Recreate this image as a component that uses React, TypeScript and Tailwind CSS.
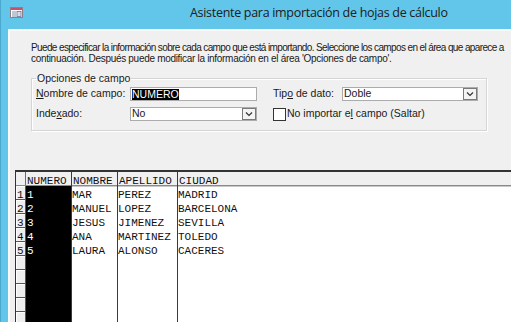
import React from "react"

const ROWS = [
  ["1", "MAR", "PEREZ", "MADRID"],
  ["2", "MANUEL", "LOPEZ", "BARCELONA"],
  ["3", "JESUS", "JIMENEZ", "SEVILLA"],
  ["4", "ANA", "MARTINEZ", "TOLEDO"],
  ["5", "LAURA", "ALONSO", "CACERES"],
  ["", "", "", ""],
  ["", "", "", ""],
  ["", "", "", ""],
  ["", "", "", ""],
  ["", "", "", ""],
]

function AppIcon() {
  return (
    <svg width="13" height="11" viewBox="0 0 13 11">
      <rect x="0.5" y="0.5" width="12" height="10" fill="#ffffff" stroke="#9a7a86" />
      <rect x="1" y="1" width="11" height="2" fill="#c94f6d" />
      <line x1="2" y1="5" x2="6" y2="5" stroke="#7d8fa8" />
      <line x1="2" y1="7" x2="6" y2="7" stroke="#7d8fa8" />
      <line x1="2" y1="9" x2="6" y2="9" stroke="#7d8fa8" />
      <rect x="7" y="4.5" width="4" height="5" fill="#d8dde6" stroke="#7d8fa8" />
    </svg>
  )
}

function DropButton() {
  return (
    <div className="w-[14px] h-[12px] border border-[#7a7a7a] bg-[#f4f4f4] flex items-center justify-center">
      <svg width="8" height="5" viewBox="0 0 8 5">
        <path d="M1 0.5 L4 3.5 L7 0.5" fill="none" stroke="#333" strokeWidth="1.2" />
      </svg>
    </div>
  )
}

const cell = "h-[14px] box-border pt-[5px] leading-[9px] whitespace-nowrap"

export default function App() {
  const ui = { fontFamily: "'Liberation Sans', Arial, sans-serif" }
  const mono = { fontFamily: "'Liberation Mono', 'Courier New', monospace" }

  return (
    <div className="w-[511px] h-[322px] overflow-hidden bg-[#62c6ea] flex flex-col border-l border-[#4aa9cc]">
      {/* title bar */}
      <div className="h-[29px] shrink-0 flex items-center">
        <div className="ml-[9px] mt-[-5px]">
          <AppIcon />
        </div>
        <div
          className="ml-[167px] text-[12.5px] tracking-[-0.3px] text-[#1b1b1b] whitespace-nowrap mt-[-2px]"
          style={{ fontFamily: "'Open Sans', 'Noto Sans', sans-serif" }}
        >
          Asistente para importación de hojas de cálculo
        </div>
      </div>

      <div className="flex flex-1 min-h-0">
        <div className="w-[7px] shrink-0" />
        <div
          className="flex-1 min-w-0 bg-[#f0f0f0] border-l-2 border-t-2 border-[#f9f9f9] flex flex-col"
          style={ui}
        >
          <p className="ml-[21px] mt-[11px] text-[10px] leading-[11px] text-[#1a1a1a] whitespace-nowrap">
            <span className="tracking-[-0.62px]">
              Puede especificar la información sobre cada campo que está importando. Seleccione los campos en el área que aparece a
            </span>
            <br />
            <span className="tracking-[-0.3px]">
              continuación. Después puede modificar la información en el área 'Opciones de campo'.
            </span>
          </p>

          {/* group box */}
          <fieldset className="ml-[21px] mt-[9px] w-[456px] h-[58px] border border-[#d5d5d5] shadow-[inset_1px_1px_0_#ffffff,1px_1px_0_#ffffff] px-[4px] pb-0 text-[10.5px] text-[#1a1a1a]">
            <legend className="px-[1px] leading-[11px]">Opciones de campo</legend>
            <div className="flex mt-[3px]">
              <div className="flex flex-col gap-[6px]">
                <div className="flex items-center h-[14px]">
                  <span className="w-[94px]">
                    <span className="underline">N</span>ombre de campo:
                  </span>
                  <div className="w-[127px] h-[14px] bg-white border border-[#acacac] flex items-center pl-[1px]">
                    <span className="bg-black text-white leading-[11px]">NUMERO</span>
                  </div>
                </div>
                <div className="flex items-center h-[14px]">
                  <span className="w-[94px]">
                    Inde<span className="underline">x</span>ado:
                  </span>
                  <div className="w-[127px] h-[14px] bg-white border border-[#acacac] flex items-center justify-between pl-[1px]">
                    <span>No</span>
                    <DropButton />
                  </div>
                </div>
              </div>
              <div className="flex flex-col gap-[6px] ml-[16px]">
                <div className="flex items-center h-[14px]">
                  <span className="w-[69px]">
                    Tip<span className="underline">o</span> de dato:
                  </span>
                  <div className="w-[136px] h-[14px] bg-white border border-[#acacac] flex items-center justify-between pl-[1px]">
                    <span>Doble</span>
                    <DropButton />
                  </div>
                </div>
                <div className="flex items-center h-[14px]">
                  <div className="w-[13px] h-[13px] bg-white border border-[#333333] mr-[1px]" />
                  <span>
                    No importar e<span className="underline">l</span> campo (Saltar)
                  </span>
                </div>
              </div>
            </div>
          </fieldset>

          {/* grid */}
          <div
            className="mt-[39px] ml-[5px] flex-1 min-h-0 border-t-2 border-l border-[#333333] bg-white text-[11px] text-[#111111]"
            style={mono}
          >
            <div className="flex h-[14px] bg-[#f0f0f0] border-b border-[#8a8a8a] shadow-[0_1px_0_#c8c8c8]">
              <div className="w-[10px] shrink-0 border-r border-[#6a6a6a]" />
              <div className={`w-[46px] shrink-0 border-r border-[#3a3a3a] pl-[1px] ${cell}`}>NUMERO</div>
              <div className={`w-[46px] shrink-0 border-r border-[#3a3a3a] pl-[1px] ${cell}`}>NOMBRE</div>
              <div className={`w-[60px] shrink-0 border-r border-[#3a3a3a] pl-[1px] ${cell}`}>APELLIDO</div>
              <div className={`flex-1 pl-[1px] ${cell}`}>CIUDAD</div>
            </div>
            {ROWS.map((r, i) => (
              <div key={i} className="flex h-[14px]">
                <div className={`w-[10px] shrink-0 bg-[#eeeeee] border-r border-b border-[#555555] shadow-[inset_1px_1px_0_#ffffff] pl-[1px] ${cell}`}>
                  {r[0]}
                </div>
                <div className={`w-[46px] shrink-0 bg-black text-white border-r border-[#3a3a3a] pl-[1px] ${cell}`}>{r[0]}</div>
                <div className={`w-[46px] shrink-0 border-r border-[#3a3a3a] ${cell}`}>{r[1]}</div>
                <div className={`w-[60px] shrink-0 border-r border-[#3a3a3a] ${cell}`}>{r[2]}</div>
                <div className={`flex-1 ${cell}`}>{r[3]}</div>
              </div>
            ))}
          </div>
        </div>
      </div>
    </div>
  )
}
